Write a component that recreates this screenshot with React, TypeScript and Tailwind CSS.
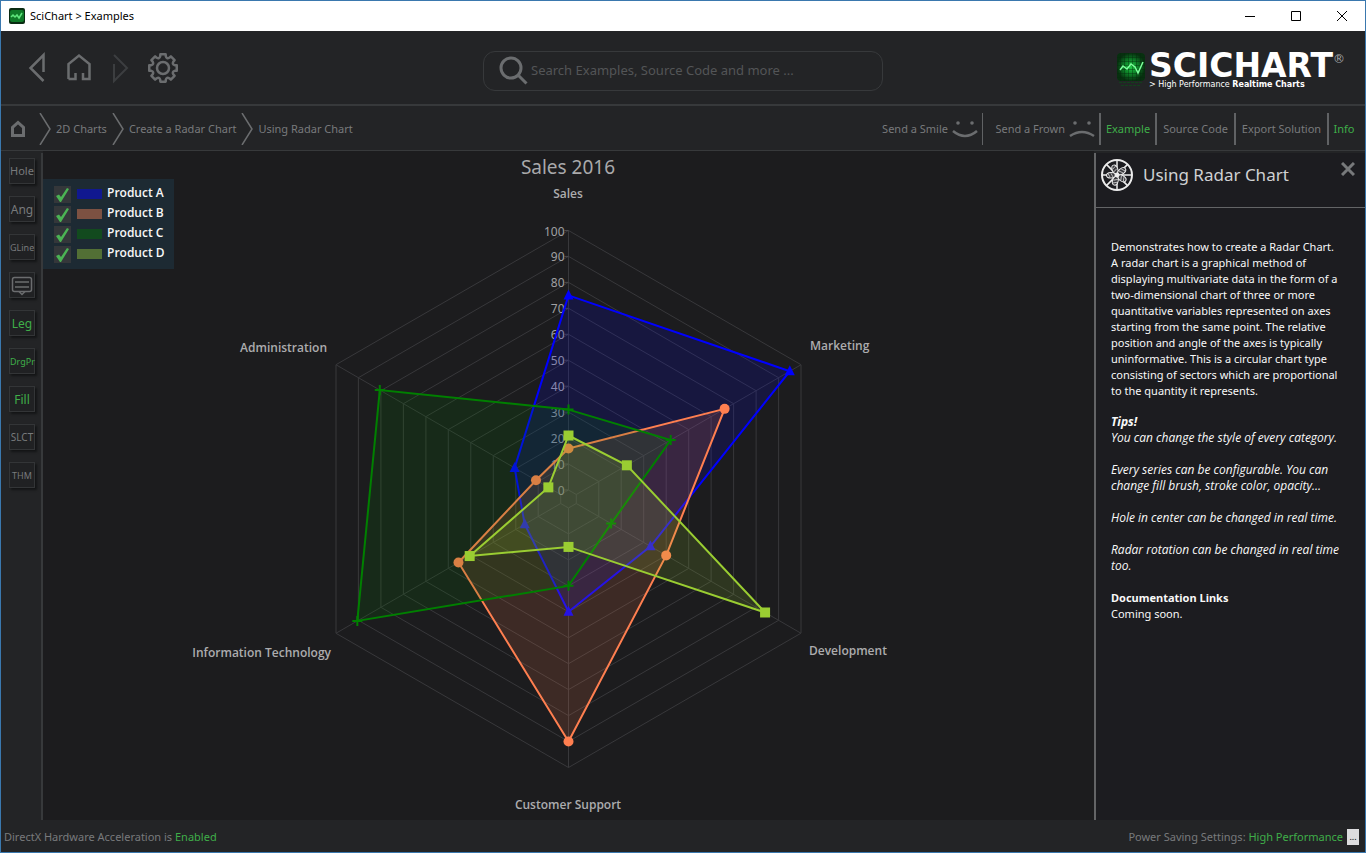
import { useState } from "react";

type Marker = "triangle" | "circle" | "plus" | "square";

type Series = {
    name: string;
    color: string;
    swatch: string;
    marker: Marker;
    values: number[];
};

// Values are ordered clockwise, starting from the Sales axis
const series: Series[] = [
    { name: "Product A", color: "#0000ff", swatch: "#10188f", marker: "triangle", values: [75, 95, 33, 40, 16, 20.5] },
    { name: "Product B", color: "#ff7f50", swatch: "#7c5142", marker: "circle", values: [16, 66, 40, 90, 45.5, 11] },
    { name: "Product C", color: "#008000", swatch: "#124a1e", marker: "plus", values: [31, 42, 15.5, 30, 90.5, 80.5] },
    { name: "Product D", color: "#9acd32", swatch: "#526f35", marker: "square", values: [21, 22.5, 84, 15, 40.5, 5.5] },
];

const categories = [
    { label: "Sales", x: 525, y: 47, anchor: "middle" },
    { label: "Marketing", x: 767, y: 199, anchor: "start" },
    { label: "Development", x: 766, y: 504, anchor: "start" },
    { label: "Customer Support", x: 525, y: 658, anchor: "middle" },
    { label: "Information Technology", x: 288, y: 506, anchor: "end" },
    { label: "Administration", x: 284, y: 201, anchor: "end" },
] as const;

const ticks = [0, 10, 20, 30, 40, 50, 60, 70, 80, 90, 100];

const CX = 525.5;
const CY = 348;
const HOLE = 9;
const RADIUS = 268.5;

function point(value: number, axis: number): [number, number] {
    const r = HOLE + ((RADIUS - HOLE) * value) / 100;
    const a = (axis * Math.PI) / 3;
    return [CX + r * Math.sin(a), CY - r * Math.cos(a)];
}

function polygon(values: number[]) {
    return values.map((v, i) => point(v, i).map((n) => n.toFixed(1)).join(",")).join(" ");
}

function gearPath(cx: number, cy: number) {
    const teeth = 8;
    const step = (Math.PI * 2) / teeth;
    const at = (r: number, a: number) => `${(cx + r * Math.sin(a)).toFixed(2)} ${(cy - r * Math.cos(a)).toFixed(2)}`;
    let d = `M${at(14, -0.19)}`;
    for (let i = 0; i < teeth; i++) {
        const a = i * step;
        d += `L${at(14, a + 0.19)}L${at(12, a + 0.24)}Q${at(9.6, a + step / 2)} ${at(12, a + step - 0.24)}L${at(14, a + step - 0.19)}`;
    }
    return d + "Z";
}

function PointMarker({ type, x, y, color }: { type: Marker; x: number; y: number; color: string }) {
    if (type === "circle") return <circle cx={x} cy={y} r="5" fill={color} />;
    if (type === "square") return <rect x={x - 5} y={y - 5} width="10" height="10" fill={color} />;
    if (type === "plus") {
        return <path d={`M${x - 5} ${y}h10M${x} ${y - 5}v10`} stroke={color} strokeWidth="2" />;
    }
    return <path d={`M${x} ${y - 6}l5 10h-10z`} fill={color} />;
}

function RadarChart({ visible }: { visible: boolean[] }) {
    return (
        <svg viewBox="0 0 1051 669" className="h-full w-full" role="img" aria-label="Sales 2016 radar chart">
            <text x="525" y="23" textAnchor="middle" fontSize="19" fill="#a9a9ab">
                Sales 2016
            </text>

            {/* Grid rings and axes */}
            <g stroke="#38383b" fill="none">
                {ticks.map((t) => (
                    <polygon key={t} points={polygon([t, t, t, t, t, t])} />
                ))}
                {categories.map((c, i) => {
                    const [x1, y1] = point(0, i);
                    const [x2, y2] = point(100, i);
                    return <line key={c.label} x1={x1} y1={y1} x2={x2} y2={y2} />;
                })}
            </g>
            {ticks.map((t) => {
                const y = point(t, 0)[1];
                return (
                    <g key={t}>
                        <line x1={CX - 4} x2={CX} y1={y} y2={y} stroke="#4a4a4d" />
                        <text x={CX - 4} y={y + 5} textAnchor="end" fontSize="12" fill="#a0a0a3">
                            {t}
                        </text>
                    </g>
                );
            })}

            {series.map((s, i) =>
                visible[i] ? (
                    <g key={s.name}>
                        <polygon
                            points={polygon(s.values)}
                            fill={s.color}
                            fillOpacity="0.15"
                            stroke={s.color}
                            strokeWidth="2"
                        />
                        {s.values.map((v, axis) => {
                            const [x, y] = point(v, axis);
                            return <PointMarker key={axis} type={s.marker} x={x} y={y} color={s.color} />;
                        })}
                    </g>
                ) : null
            )}

            <g className="font-['Open_Sans'] text-[12px] font-semibold" fill="#acacae">
                {categories.map((c) => (
                    <text key={c.label} x={c.x} y={c.y} textAnchor={c.anchor}>
                        {c.label}
                    </text>
                ))}
            </g>
        </svg>
    );
}

function LogoMark() {
    return (
        <svg viewBox="0 0 28 36" className="h-9 w-7" aria-hidden="true">
            <defs>
                <radialGradient id="glow">
                    <stop offset="0" stopColor="#1fc845" />
                    <stop offset="0.5" stopColor="#0d8128" />
                    <stop offset="1" stopColor="#07300f" />
                </radialGradient>
            </defs>
            <rect width="28" height="28" rx="4" fill="url(#glow)" />
            <path
                d="M3.500 0v28M7.500 0v28M11.500 0v28M15.500 0v28M19.500 0v28M23.500 0v28M0 4.500h28M0 8.500h28M0 12.500h28M0 16.500h28M0 20.500h28M0 24.500h28"
                stroke="#042a0c"
                strokeOpacity="0.4"
            />
            <path d="M3 17l3-4 4 3 4-5 4 3 3 6 5-11" fill="none" stroke="#7dff9c" strokeWidth="1.500" />
            {/* Faint reflection */}
            <path d="M2 29.500h24M4 32.500h20" stroke="#12401c" strokeDasharray="3 1" />
        </svg>
    );
}

function AppIcon() {
    return (
        <svg viewBox="0 0 16 16" className="mr-[5px] size-4" aria-hidden="true">
            <rect width="16" height="16" rx="2" fill="#0a2b12" />
            <rect x="1" y="2" width="14" height="12" rx="2" fill="#0f7a28" />
            <path d="M2 9l2-2 2 2 2-2 2 3 3-5" fill="none" stroke="#5fe67d" strokeWidth="1.500" />
        </svg>
    );
}

function TitleBar() {
    return (
        <div className="flex h-[30px] shrink-0 items-center bg-white pl-2 text-black">
            <AppIcon />
            <span className="text-[11px]">SciChart &gt; Examples</span>
            <div className="ml-auto flex h-full">
                <button aria-label="Minimize" className="grid w-[46px] place-items-center">
                    <svg width="10" height="10" stroke="black"><path d="M0 5.500h10" /></svg>
                </button>
                <button aria-label="Maximize" className="grid w-[46px] place-items-center">
                    <svg width="10" height="10" stroke="black" fill="none"><path d="M.5.5h9v9h-9z" /></svg>
                </button>
                <button aria-label="Close" className="grid w-[46px] place-items-center">
                    <svg width="10" height="10" stroke="black"><path d="M0 0l10 10M10 0L0 10" /></svg>
                </button>
            </div>
        </div>
    );
}

function Header() {
    return (
        <header className="grid h-[75px] shrink-0 grid-cols-[1fr_400px_1fr] items-center border-b-2 border-[#37393b]">
            <nav className="flex items-center pl-[27px]">
                <button aria-label="Back" className="mr-5">
                    <svg width="18" height="32" fill="none" stroke="#6b6d6f" strokeWidth="2.500">
                        <path d="M15.500 20V3L2.500 16l13 13" />
                    </svg>
                </button>
                <button aria-label="Home" className="mr-5">
                    <svg width="26" height="32" fill="none" stroke="#6b6d6f" strokeWidth="2.500">
                        <path d="M2.500 27V12L13 3.500l10.500 8.500v15H17v-6M2.500 27H9.500v-6" />
                    </svg>
                </button>
                <button aria-label="Forward" disabled className="mr-[17px]">
                    <svg width="18" height="32" fill="none" stroke="#3c3e40" strokeWidth="2">
                        <path d="M2 12v17l13-13L2 3" />
                    </svg>
                </button>
                <button aria-label="Settings">
                    <svg width="32" height="32" fill="none" stroke="#6b6d6f" strokeWidth="2.500" strokeLinejoin="round">
                        <path d={gearPath(16, 16)} />
                        <circle cx="16" cy="16" r="6" />
                    </svg>
                </button>
            </nav>

            <label className="mt-1.5 flex h-10 items-center rounded-xl border border-[#37393b] pl-[15px]">
                <svg width="30" height="30" fill="none" stroke="#6b6d6f" strokeWidth="3">
                    <circle cx="12" cy="12" r="10" />
                    <path d="M19 19l8.500 8.500" />
                </svg>
                <input
                    type="text"
                    aria-label="Search"
                    placeholder="Search Examples, Source Code and more ..."
                    className="ml-0.5 min-w-0 flex-1 bg-transparent text-[13px] text-[#9a9c9e] outline-none placeholder:text-[#535557]"
                />
            </label>

            <div className="mt-2 flex justify-end gap-1 pr-5">
                <LogoMark />
                <div className="font-['DejaVu_Sans'] text-white">
                    <div className="flex h-[26px] items-start leading-[26px]">
                        <span className="text-[33px] font-bold">SCICHART</span>
                        <span className="text-[12px] leading-3 text-[#a5a7a9]">®</span>
                    </div>
                    <div className="text-[8px] leading-3">
                        &gt; High Performance <b>Realtime Charts</b>
                    </div>
                </div>
            </div>
        </header>
    );
}

function Chevron() {
    return (
        <svg width="12" height="32" viewBox="0 0 12 32" fill="none" stroke="#6b6d6f" strokeWidth="1.500">
            <path d="M1 0l10 16L1 32" />
        </svg>
    );
}

function Face({ frown = false }: { frown?: boolean }) {
    return (
        <svg width="26" height="20" viewBox="0 0 26 20" fill="none" stroke="#6b6d6f" strokeWidth="2.500">
            <circle cx="6" cy="4" r="1.800" fill="#6b6d6f" stroke="none" />
            <circle cx="20" cy="4" r="1.800" fill="#6b6d6f" stroke="none" />
            <path d={frown ? "M1 17q12-8 24 0" : "M1 12q12 10 24 0"} />
        </svg>
    );
}

function Toolbar() {
    const tab = "h-8 border-l-2 border-[#606264] text-center";
    return (
        <div className="flex h-[45px] shrink-0 items-center justify-between border-b border-[#37393b] pt-0.5 text-[11px]">
            <nav aria-label="Breadcrumb" className="flex items-center gap-[5px] pl-[9px]">
                <a href="#home" aria-label="Home" className="mr-2">
                    <svg width="16" height="18" fill="none" stroke="#6b6d6f" strokeWidth="3">
                        <path d="M2.500 15.500v-8L8 2.500l5.500 5v8z" />
                    </svg>
                </a>
                <Chevron />
                <a href="#charts">2D Charts</a>
                <Chevron />
                <a href="#radar">Create a Radar Chart</a>
                <Chevron />
                <a href="#using">Using Radar Chart</a>
            </nav>
            <div className="flex items-center">
                <button className="flex h-8 items-center gap-1 pr-1">
                    Send a Smile <Face />
                </button>
                <button className="flex h-8 w-[117px] items-center justify-end gap-1 border-l border-[#606264] pr-1">
                    Send a Frown <Face frown />
                </button>
                <button className={`${tab} w-14 text-[#3fae49]`}>Example</button>
                <button className={`${tab} w-[79px]`}>Source Code</button>
                <button className={`${tab} w-[93px]`}>Export Solution</button>
                <button className={`${tab} w-[38px] pr-1.5 text-[#3fae49]`}>Info</button>
            </div>
        </div>
    );
}

const tools = [
    { label: "Hole", style: "text-[11px]" },
    { label: "Ang", style: "text-[12px]" },
    { label: "GLine", style: "text-[9px]" },
    { label: "Tooltip", style: "" },
    { label: "Leg", style: "text-[12px] text-[#3fae49]" },
    { label: "DrgPr", style: "text-[9px] text-[#3fae49]" },
    { label: "Fill", style: "text-[12px] text-[#3fae49]" },
    { label: "SLCT", style: "text-[10px]" },
    { label: "THM", style: "text-[9px]" },
];

function SideTools() {
    return (
        <aside className="mt-0.5 flex w-[42px] shrink-0 flex-col gap-3 border-r-2 border-[#37393b] pt-[5px] pl-2">
            {tools.map((t) => (
                <button
                    key={t.label}
                    aria-label={t.label}
                    className={`grid size-[26px] place-items-center border border-[#333537] bg-[#202123] pt-px shadow-[2px_2px_2px_#141516] ${t.style}`}
                >
                    {t.label === "Tooltip" ? (
                        <svg width="22" height="20" fill="none" stroke="#6b6d6f" strokeWidth="1.500">
                            <rect x="1.500" y="1.500" width="19" height="14" rx="2" />
                            <path d="M4 6h14M4 11h14" />
                            <path d="M8 15.500l3 3 3-3" />
                        </svg>
                    ) : (
                        t.label
                    )}
                </button>
            ))}
        </aside>
    );
}

function Legend({ visible, onToggle }: { visible: boolean[]; onToggle: (i: number) => void }) {
    return (
        <div className="absolute top-7 left-0 w-[131px] bg-[#1d2a33] py-[5px] pl-[11px]">
            {series.map((s, i) => (
                <label
                    key={s.name}
                    className="flex h-5 items-center font-['Open_Sans'] text-[12px] leading-4 font-semibold text-[#f8f8f8]"
                >
                    <span className="grid size-[17px] place-items-center bg-[#34373a]">
                        <input
                            type="checkbox"
                            checked={visible[i]}
                            onChange={() => onToggle(i)}
                            className="peer col-start-1 row-start-1 size-full appearance-none"
                        />
                        <svg
                            width="15"
                            height="15"
                            className="pointer-events-none invisible col-start-1 row-start-1 peer-checked:visible"
                        >
                            <path d="M1 9l3-1.500 2 2.500 6-9 2 1-8 13H5z" fill="#4bb354" />
                        </svg>
                    </span>
                    <span className="mr-[5px] ml-1.5 h-2.5 w-[25px]" style={{ backgroundColor: s.swatch }} />
                    <span className="pb-0.5">{s.name}</span>
                </label>
            ))}
        </div>
    );
}

function RadarIcon() {
    const petals = [-20, 52, 124, 196, 268];
    return (
        <svg width="34" height="34" viewBox="-17 -17 34 34" fill="none" stroke="#ececec" aria-hidden="true">
            <circle r="15" strokeWidth="2" />
            <path d="M0-15v30M-15 0h30M-10.600-10.600l21.200 21.200M10.600-10.600l-21.200 21.200" strokeWidth="1.500" />
            {petals.map((a) => (
                <g key={a} transform={`rotate(${a})`}>
                    <ellipse cy="-6" rx="2.800" ry="4.500" fill="#38383c" />
                    <path d="M-2-7l4-2M-2-4l4-2" strokeWidth="0.700" />
                </g>
            ))}
            <circle r="2" fill="#ececec" />
        </svg>
    );
}

function InfoPanel() {
    return (
        <aside className="mt-0.5 w-[271px] shrink-0 border-l-2 border-[#636466] bg-[#1c1c20] text-[11px] leading-4 text-[#f8f8f8]">
            <div className="flex h-[55px] items-start border-b border-[#636466] pt-[5px] pl-1">
                <RadarIcon />
                <h1 className="ml-[9px] text-[17px] leading-[34px] text-[#cfd1d3]">Using Radar Chart</h1>
                <button aria-label="Close panel" className="mt-1 mr-2.5 ml-auto">
                    <svg width="14" height="14" stroke="#77797b" strokeWidth="3">
                        <path d="M1 1l12 12M13 1L1 13" />
                    </svg>
                </button>
            </div>
            <div className="pt-[31px] pl-[15px]">
                <p>
                    Demonstrates how to create a Radar Chart.
                    <br />A radar chart is a graphical method of
                    <br />displaying multivariate data in the form of a
                    <br />two-dimensional chart of three or more
                    <br />quantitative variables represented on axes
                    <br />starting from the same point. The relative
                    <br />position and angle of the axes is typically
                    <br />uninformative. This is a circular chart type
                    <br />consisting of sectors which are proportional
                    <br />to the quantity it represents.
                </p>
                <div className="mt-[15px] space-y-4 font-['Open_Sans'] text-[12px] leading-4 italic">
                    <p>
                        <b>Tips!</b>
                        <br />You can change the style of every category.
                    </p>
                    <p>
                        Every series can be configurable. You can
                        <br />change fill brush, stroke color, opacity...
                    </p>
                    <p>Hole in center can be changed in real time.</p>
                    <p>
                        Radar rotation can be changed in real time
                        <br />too.
                    </p>
                </div>
                <h2 className="mt-4 font-bold">Documentation Links</h2>
                <p>Coming soon.</p>
            </div>
        </aside>
    );
}

export default function App() {
    const [visible, setVisible] = useState([true, true, true, true]);

    const toggle = (i: number) => setVisible(visible.map((v, n) => (n === i ? !v : v)));

    return (
        <div className="flex h-screen min-h-[640px] flex-col border border-[#3a78ae] bg-[#232426] font-['Noto_Sans',sans-serif] text-[#787a7c]">
            <TitleBar />
            <Header />
            <Toolbar />
            <main className="flex min-h-0 flex-1">
                <SideTools />
                <section className="relative min-w-0 flex-1 bg-[#1c1c1e]">
                    <RadarChart visible={visible} />
                    <Legend visible={visible} onToggle={toggle} />
                </section>
                <InfoPanel />
            </main>
            <footer className="flex h-8 shrink-0 items-center justify-between pt-0.5 pr-1.5 pl-[3px] text-[11px]">
                <span>
                    DirectX Hardware Acceleration is <span className="text-[#3fae49]">Enabled</span>
                </span>
                <span className="flex items-center">
                    Power Saving Settings:&nbsp;<span className="text-[#3fae49]">High Performance</span>
                    <button aria-label="Power options" className="ml-1 h-4 w-3 bg-[#dcdcde] text-[9px] leading-4 text-black">
                        ...
                    </button>
                </span>
            </footer>
        </div>
    );
}
